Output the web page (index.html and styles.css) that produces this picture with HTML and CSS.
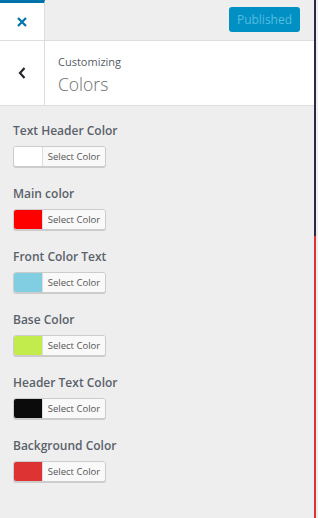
FILE: index.html
```html
<!DOCTYPE html>
<html lang="en">
<head>
  <meta charset="UTF-8" />
  <meta name="viewport" content="width=device-width, initial-scale=1.0"/>
  <title>Customizing Colors</title>
  <link rel="stylesheet" href="styles.css">
</head>
<body>
  <div class="panel">
    <div class="topbar">
      <button class="close-btn" aria-label="Close">
        <svg width="10" height="10" viewBox="0 0 10 10">
          <path d="M1 1 L9 9 M9 1 L1 9" stroke="#0073aa" stroke-width="2.2" fill="none"/>
        </svg>
      </button>
      <div class="topbar-actions">
        <button class="publish-btn" disabled>Published</button>
      </div>
    </div>

    <div class="section-head">
      <button class="back-btn" aria-label="Back">
        <svg width="8" height="12" viewBox="0 0 8 12">
          <path d="M6.5 1 L2 6 L6.5 11" stroke="#23282d" stroke-width="2.2" fill="none"/>
        </svg>
      </button>
      <div class="section-title">
        <span class="crumb">Customizing</span>
        <span class="title">Colors</span>
      </div>
    </div>

    <div class="controls">
      <div class="control">
        <div class="label">Text Header Color</div>
        <button class="picker"><span class="swatch" style="background:#ffffff"></span><span class="pick-text">Select Color</span></button>
      </div>
      <div class="control">
        <div class="label">Main color</div>
        <button class="picker"><span class="swatch" style="background:#ff0000"></span><span class="pick-text">Select Color</span></button>
      </div>
      <div class="control">
        <div class="label">Front Color Text</div>
        <button class="picker"><span class="swatch" style="background:#81cde2"></span><span class="pick-text">Select Color</span></button>
      </div>
      <div class="control">
        <div class="label">Base Color</div>
        <button class="picker"><span class="swatch" style="background:#c2ec4c"></span><span class="pick-text">Select Color</span></button>
      </div>
      <div class="control">
        <div class="label">Header Text Color</div>
        <button class="picker"><span class="swatch" style="background:#0b0b0b"></span><span class="pick-text">Select Color</span></button>
      </div>
      <div class="control">
        <div class="label">Background Color</div>
        <button class="picker"><span class="swatch" style="background:#dd3333"></span><span class="pick-text">Select Color</span></button>
      </div>
    </div>
  </div>

  <div class="preview-edge">
    <div class="edge-top"></div>
    <div class="edge-bottom"></div>
  </div>
</body>
</html>
```

FILE: styles.css
```css
body {
  margin: 0;
  height: 518px;
  display: flex;
  background: #eeeeee;
  font-family: 'Open Sans', 'Segoe UI', sans-serif;
  color: #555d66;
  overflow: hidden;
}

.panel {
  flex: 1;
  display: flex;
  flex-direction: column;
  background: #eeeeee;
}

button {
  font-family: inherit;
  cursor: pointer;
}

/* top bar */
.topbar {
  height: 40px;
  display: flex;
  border-bottom: 1px solid #dddddd;
}

.close-btn {
  width: 45px;
  height: 40px;
  padding: 0;
  border: none;
  border-top: 3px solid #0073aa;
  border-right: 1px solid #dddddd;
  background: #ffffff;
  display: flex;
  align-items: center;
  justify-content: center;
}

.topbar-actions {
  flex: 1;
  display: flex;
  justify-content: flex-end;
  align-items: flex-start;
  padding: 7px 14px 0 0;
}

.publish-btn {
  width: 71px;
  height: 25px;
  padding: 0;
  border: none;
  border-radius: 3px;
  background: #0090c4;
  color: #56bde0;
  font-size: 12px;
}

/* section header */
.section-head {
  height: 64px;
  display: flex;
  background: #ffffff;
  border-bottom: 1px solid #dddddd;
}

.back-btn {
  width: 45px;
  padding: 0;
  border: none;
  border-right: 1px solid #dddddd;
  background: #ffffff;
  display: flex;
  align-items: center;
  justify-content: center;
}

.section-title {
  display: flex;
  flex-direction: column;
  padding: 13px 0 0 13px;
}

.crumb {
  font-size: 11px;
  line-height: 16px;
  color: #555d66;
}

.title {
  font-size: 17.5px;
  font-weight: 300;
  line-height: 28px;
  color: #6c6c6c;
}

/* color controls */
.controls {
  padding: 16px 0 0 13px;
  border-left: 2px solid #f4f4f4;
  margin-left: -2px;
}

.control {
  margin-bottom: 18px;
}

.label {
  font-size: 12px;
  font-weight: 600;
  line-height: 18px;
  margin-bottom: 6px;
  color: #5a616a;
}

.picker {
  display: flex;
  height: 21px;
  width: 93px;
  padding: 0;
  border: 1px solid #cccccc;
  border-radius: 3px;
  background: #f7f7f7;
  box-shadow: 0 1px 0 #cccccc;
  overflow: hidden;
}

.swatch {
  width: 28px;
  height: 100%;
  border-right: 1px solid #dddddd;
}

.pick-text {
  flex: 1;
  font-size: 9.5px;
  line-height: 19px;
  color: #555555;
  background: #f9f9f9;
  text-align: center;
}

/* edge of the preview frame */
.preview-edge {
  width: 2px;
  margin-right: 2px;
  display: flex;
  flex-direction: column;
}

.edge-top {
  height: 236px;
  background: #2f2744;
}

.edge-bottom {
  flex: 1;
  background: #dd3333;
}
```
